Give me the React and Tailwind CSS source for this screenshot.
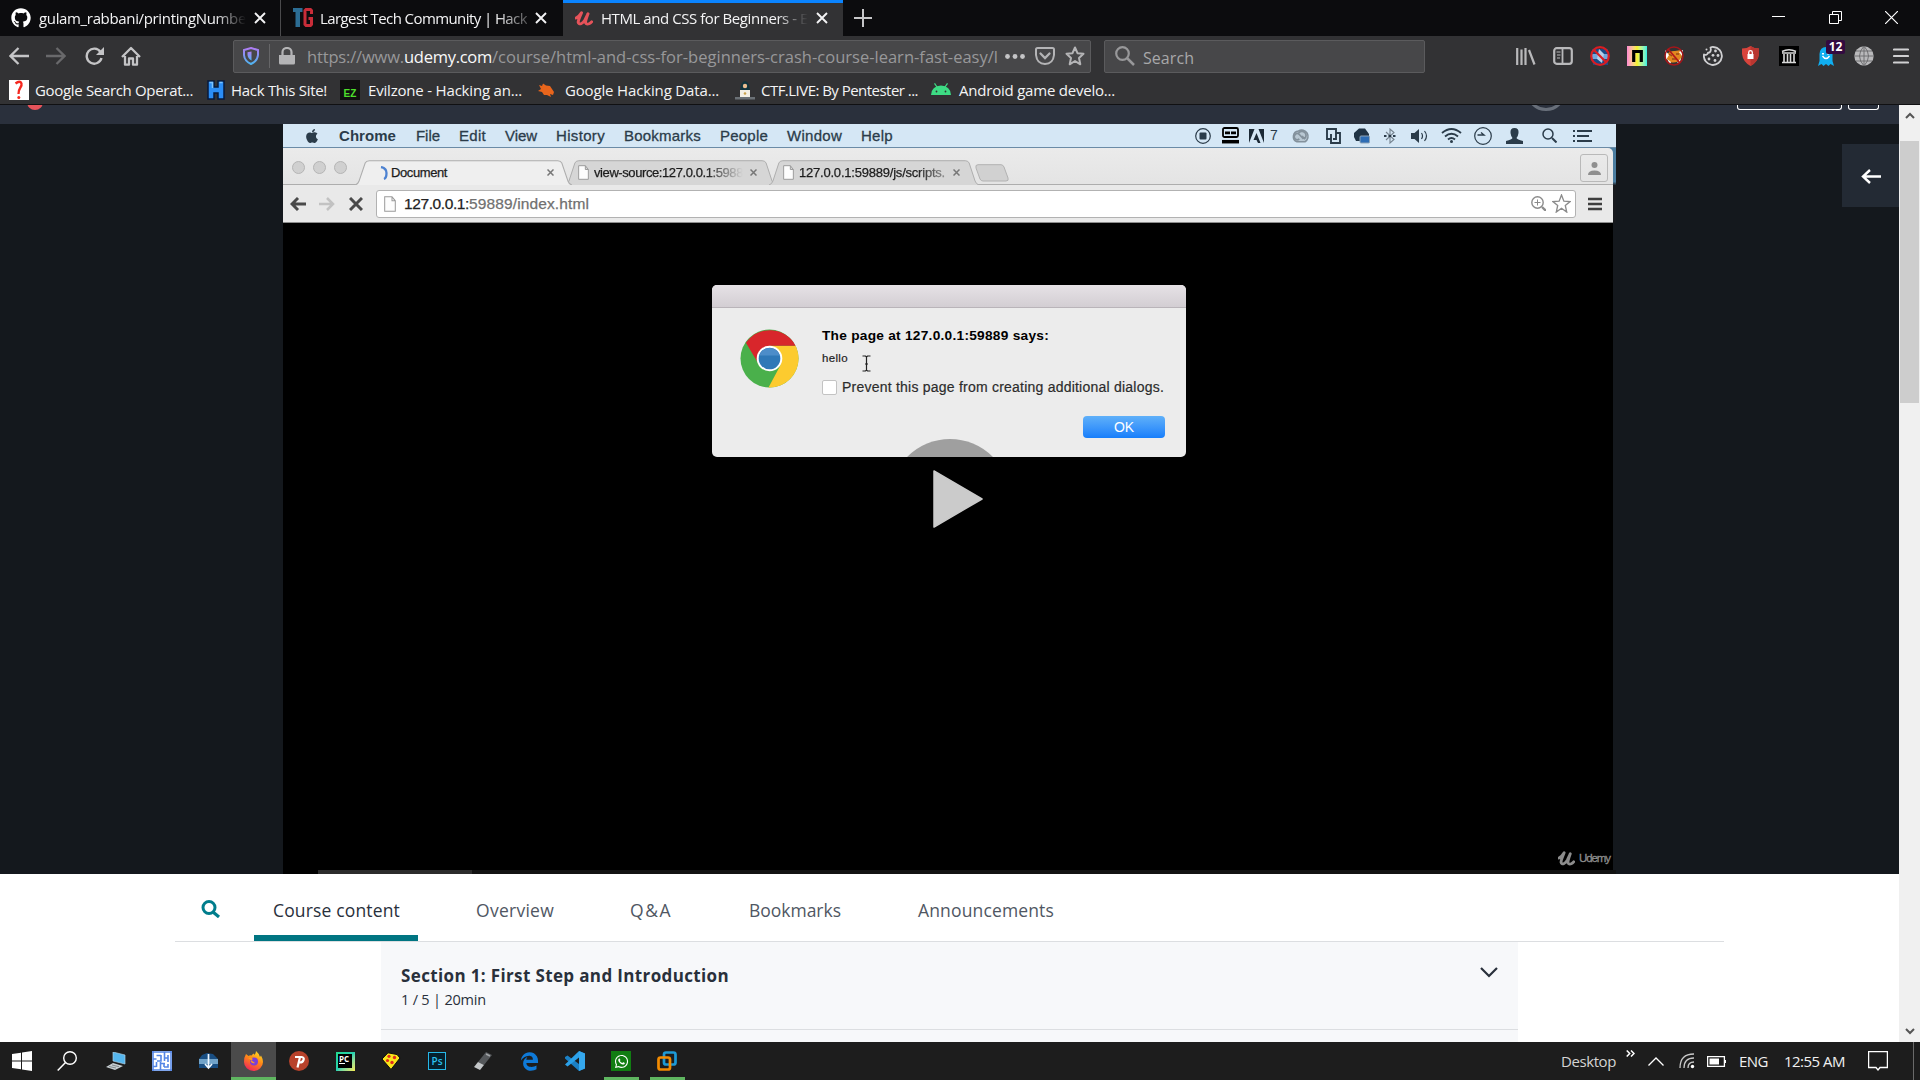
import { useLayoutEffect, useRef } from "react";
import { FaGithub, FaWhatsapp, FaApple, FaEdgeLegacy } from "react-icons/fa6";

const UI = "font-['Open_Sans',sans-serif]";

// Text line that spreads its letters over the width its class sets.
function Fit({ className = "", children }) {
  const box = useRef(null);
  const ink = useRef(null);
  useLayoutEffect(() => {
    const n = ink.current.textContent.length;
    ink.current.style.letterSpacing = "0px";
    const natural = ink.current.getBoundingClientRect().width;
    ink.current.style.letterSpacing = `${(box.current.clientWidth - natural) / n}px`;
  });
  return (
    <span ref={box} className={`block shrink-0 whitespace-pre ${className}`}>
      <span ref={ink} className="inline-block">{children}</span>
    </span>
  );
}

function Svg({ className = "", box = "0 0 20 20", children }) {
  return (
    <svg viewBox={box} preserveAspectRatio="none" fill="none" className={`block shrink-0 ${className}`}>
      {children}
    </svg>
  );
}

const Cross = ({ className }) => (
  <Svg className={className} box="0 0 12 12">
    <path d="M1 1 11 11M11 1 1 11" stroke="currentColor" strokeWidth="1.9" />
  </Svg>
);

const UdemyU = ({ className }) => (
  <Svg className={className} box="0 0 18 16">
    <path
      d="M1 7.500C3 6.600 5.200 4 6.500 1.800C5 6 3 9.500 3.200 12C3.800 15.500 8 13.500 10 9.500L13 3C11.500 7.500 9.500 12 11.200 13.500C12.800 14.700 15.500 13.200 16.700 11.500"
      stroke="currentColor"
      strokeWidth="3"
      strokeLinecap="round"
      strokeLinejoin="round"
    />
  </Svg>
);

function TabStrip() {
  return (
    <div className="flex h-9 bg-[#0c0c0e] text-[15px] leading-[36px] text-[#f4f4f5]">
      <div className="flex w-[281px] items-center border-r border-[#4a4a4c] pl-[11px]">
        <FaGithub className="size-5 shrink-0 text-white" />
        <Fit className="ml-2 w-[207px] [mask-image:linear-gradient(to_right,#000_85%,transparent)]">gulam_rabbani/printingNumbe</Fit>
        <Cross className="ml-2 size-3" />
      </div>
      <div className="flex w-[282px] items-center pl-3">
        <Svg className="size-5">
          <path d="M0 0H9.500V4H7V19H2.500V4H0Z" fill="#2c6d94" />
          <path d="M18.500 6V2.500L17.500 1.500H13L12 2.500V16.500L13 17.500H17.500L18.500 16.500V10.500H15.500" stroke="#c92d39" strokeWidth="3" />
        </Svg>
        <Fit className="ml-[7px] w-[207px] [mask-image:linear-gradient(to_right,#000_85%,rgba(0,0,0,.3))]">Largest Tech Community | Hack</Fit>
        <Cross className="ml-2 size-3" />
      </div>
      <div className="flex w-[280px] items-center border-t-[3px] border-[#0a84ff] bg-[#323234] pb-[3px] pl-3">
        <UdemyU className="h-[15px] w-[18px] text-[#e6535a]" />
        <Fit className="ml-2 w-[207px] [mask-image:linear-gradient(to_right,#000_85%,rgba(0,0,0,.3)_95%,transparent)]">HTML and CSS for Beginners - E</Fit>
        <Cross className="ml-2 size-3" />
      </div>
      <Svg className="ml-[11px] mt-[9px] size-[18px]" box="0 0 18 18">
        <path d="M9 0V18M0 9H18" stroke="#c6c6c8" strokeWidth="2" />
      </Svg>
      <div className="ml-auto mr-[22px] flex pt-[11px] text-white">
        <Svg className="h-[13px] w-[13px]" box="0 0 13 13"><path d="M0 5.500H13" stroke="currentColor" /></Svg>
        <Svg className="ml-11 size-[13px]" box="0 0 13 13">
          <path d="M.5 3.500H9.500V12.500H.5ZM3.500 3V.5H12.500V9.500H10" stroke="currentColor" />
        </Svg>
        <Svg className="ml-[43px] size-[13px]" box="0 0 13 13"><path d="M0 0 13 13M13 0 0 13" stroke="currentColor" strokeWidth="1.200" /></Svg>
      </div>
    </div>
  );
}

function Extensions() {
  return (
    <div className="ml-auto mr-[11px] flex h-5 items-center gap-[17px] text-[#b9b9bb]">
      <Svg className="h-[19px] w-5" box="0 0 20 19">
        <path d="M1.200 1V18M5.500 2.500V18M9.500 1V18M13 3 18.500 17.500" stroke="currentColor" strokeWidth="2.200" />
      </Svg>
      <Svg className="h-[18px] w-5" box="0 0 20 18">
        <rect x="1.200" y="1.200" width="17.600" height="15.600" rx="2.500" stroke="currentColor" strokeWidth="2.200" />
        <path d="M9.500 1V17" stroke="currentColor" strokeWidth="1.800" />
        <path d="M3.500 5H7.500M4 8H7.500M4 11H7" stroke="currentColor" strokeWidth="1.200" />
      </Svg>
      <Svg className="size-5">
        <path d="M2 3H18V19H3Z" fill="#194a86" />
        <path d="M2 8H18V13H2Z" fill="#72a7dd" />
        <path d="M9 3 14 8 12 17 7 13Z" fill="#b5cfe9" />
        <circle cx="10" cy="10" r="8.800" stroke="#d91d23" strokeWidth="2.200" />
        <path d="M4 4 16 16" stroke="#d91d23" strokeWidth="2.200" />
      </Svg>
      <div className="flex size-5 items-center justify-center bg-linear-to-r from-[#ff8ad0] via-[#f7f31a] to-[#28f0e4]">
        <Svg className="h-3 w-[11px]" box="0 0 11 12"><path d="M1.700 12V1.500H9.300V12" stroke="#000" strokeWidth="3.200" /></Svg>
      </div>
      <Svg className="size-5">
        <path d="M2 9Q6 4.500 11 5L17 4Q19 8 17 13Q12 18 6 16Q2 14 2 9Z" fill="#e3871f" />
        <path d="M1 4 5 9 2 14ZM19 4 15 6 18 10ZM3 13 7 16 6 18ZM17 12 16 16 13 17Z" fill="#fff" />
        <path d="M5 8 8 10M12 8H15M8 13H12" stroke="#9a4a14" strokeWidth="1.300" />
        <circle cx="10" cy="10" r="9" stroke="#a4161a" strokeWidth="1.500" />
        <path d="M4 3 16 17" stroke="#b4161a" strokeWidth="1.700" />
      </Svg>
      <Svg className="ml-[2px] size-5">
        <path d="M10.500 1A9 9 0 1 1 1 8.500C2.500 9.500 4.500 8.700 5 6.700C7 7 8.500 5 7.500 1.500Q9 .8 10.500 1Z" stroke="#d0d0d2" strokeWidth="1.800" strokeLinejoin="round" />
        <g fill="#d0d0d2"><circle cx="12.500" cy="5" r="1.400" /><circle cx="10" cy="9.300" r="1.400" /><circle cx="15" cy="9.500" r="1.400" /><circle cx="6" cy="13" r="1.400" /><circle cx="12" cy="14.500" r="1.400" /><circle cx="3.500" cy="3.500" r="1" /></g>
      </Svg>
      <Svg className="ml-[2px] h-5 w-[17px]" box="0 0 17 20">
        <path d="M8.500 0Q12 2.500 17 2.500V8Q16 16 8.500 20Q1 16 0 8V2.500Q5 2.500 8.500 0Z" fill="#d8443c" />
        <path d="M8.500 0Q12 2.500 17 2.500V8Q16 16 8.500 20Z" fill="#b93630" />
        <path d="M5.500 8H11.500V13H5.500Z" fill="#fff" />
        <path d="M6.700 8V6.500a1.800 1.800 0 0 1 3.600 0V8" stroke="#fff" strokeWidth="1.300" />
      </Svg>
      <div className="ml-[3px] flex size-5 items-center justify-center bg-black">
        <Svg className="size-4" box="0 0 16 16">
          <path d="M1 3.500Q8 0 15 3.500M1 5H15M1 14.500H15M3 6V14M6.500 6V14M9.500 6V14M13 6V14" stroke="#d8d8d8" strokeWidth="1.600" />
        </Svg>
      </div>
      <div className="relative mx-[2px] h-[19px] w-4">
        <Svg className="h-[19px] w-4" box="0 0 16 19">
          <path d="M0 19 1.500 14V7Q2 0 8 0T14.500 7V14L16 19 12.500 17 10.500 19 8 17 5.500 19 3.500 17Z" fill="#10aef0" />
          <path d="M4.500 9Q8 14 11.500 9" stroke="#fff" strokeWidth="1.400" />
          <path d="M5 6V7.500M10 6V7.500" stroke="#fff" strokeWidth="2" />
        </Svg>
        <span className="absolute -top-[7px] left-2 flex h-[14px] w-[19px] items-center justify-center rounded-[2px] bg-[#330a40] text-[12px] font-bold leading-none text-white">12</span>
      </div>
      <Svg className="ml-px size-5">
        <circle cx="10" cy="10" r="9.700" fill="#b9b9bb" />
        <path d="M10 0V20M0 10H20M2 5H18M2 15H18M10 0Q1 10 10 20M10 0Q19 10 10 20" stroke="#69696b" strokeWidth=".9" />
      </Svg>
      <Svg className="ml-[2px] h-4 w-4" box="0 0 16 16">
        <path d="M1 1.500H15M1 8H15M1 14.500H15" stroke="#d0d0d2" strokeWidth="2.200" strokeLinecap="round" />
      </Svg>
    </div>
  );
}

function NavBar() {
  return (
    <div className="flex h-10 items-center bg-[#323234] pl-[9px] text-[#c4c4c6]">
      <Svg className="h-[18px] w-5" box="0 0 20 18"><path d="M20 9H2M9.500 1 1.500 9 9.500 17" stroke="currentColor" strokeWidth="2.300" /></Svg>
      <Svg className="ml-[17px] h-[18px] w-5 text-[#69696b]" box="0 0 20 18"><path d="M0 9H18M10.500 1 18.500 9 10.500 17" stroke="currentColor" strokeWidth="2.300" /></Svg>
      <Svg className="ml-[19px] h-[18px] w-[19px]" box="0 0 19 18">
        <path d="M15.500 5A7.500 7.500 0 1 0 16.500 11" stroke="currentColor" strokeWidth="2.400" /><path d="M19 0V8H11Z" fill="currentColor" />
      </Svg>
      <Svg className="ml-[17px] h-5 w-5">
        <path d="M1 11 10 2 19 11M4 10V18.700H8V12.500H12V18.700H16V10" stroke="currentColor" strokeWidth="2.300" strokeLinejoin="round" />
      </Svg>
      <div className="ml-[92px] flex h-[33px] w-[858px] items-center rounded-[2px] border border-[#5b5b5d] bg-[#474749] pl-[9px]">
        <Svg className="h-[18px] w-4" box="0 0 16 18">
          <defs><linearGradient id="shield" x1="0" y1="0" x2="0" y2="1"><stop stopColor="#b07cf5" /><stop offset="1" stopColor="#4fb4f0" /></linearGradient></defs>
          <path d="M8 1 15 3V8Q14.500 14 8 17Q1.500 14 1 8V3Z" stroke="url(#shield)" strokeWidth="2" />
          <path d="M8.500 4.500V13.500Q5 11.500 4.500 8V5.200Z" fill="url(#shield)" />
        </Svg>
        <span className="ml-[10px] h-6 w-px bg-[#666668]" />
        <Svg className="ml-[9px] h-[18px] w-4" box="0 0 16 18">
          <path d="M0 8H16V16Q16 17.500 14.500 17.500H1.500Q0 17.500 0 16Z" fill="#b4b4b6" /><path d="M3.500 8V5a4.500 4 0 0 1 9 0V8" stroke="#b4b4b6" strokeWidth="2.200" />
        </Svg>
        <Fit className="ml-3 mt-[3px] w-[97px] text-[16.5px] text-[#98989a]">https://www.</Fit>
        <Fit className="mt-[3px] w-[88px] text-[16.5px] text-[#f9f9fa]">udemy.com</Fit>
        <Fit className="mt-[3px] w-[506px] text-[16.5px] text-[#98989a]">/course/html-and-css-for-beginners-crash-course-learn-fast-easy/l</Fit>
        <Svg className="ml-[7px] h-[5px] w-5" box="0 0 20 5"><g fill="#c4c4c6"><circle cx="2.500" cy="2.500" r="2.400" /><circle cx="10" cy="2.500" r="2.400" /><circle cx="17.500" cy="2.500" r="2.400" /></g></Svg>
        <Svg className="ml-[10px] h-[18px] w-5" box="0 0 20 18">
          <path d="M1 2.500Q1 1 2.500 1H17.500Q19 1 19 2.500V8Q18 17 10 17Q2 17 1 8Z" stroke="#b4b4b6" strokeWidth="2" />
          <path d="M5.500 6.500 10 11 14.500 6.500" stroke="#b4b4b6" strokeWidth="2.300" strokeLinecap="round" />
        </Svg>
        <Svg className="ml-[10px] size-5"><path d="M10 1.500 12.500 7.200 18.500 7.800 14 12 15.300 18.300 10 15 4.700 18.300 6 12 1.500 7.800 7.500 7.200Z" stroke="#b4b4b6" strokeWidth="2" strokeLinejoin="round" /></Svg>
      </div>
      <div className="ml-[13px] flex h-[33px] w-[321px] items-center rounded-[2px] border border-[#5b5b5d] bg-[#474749] pl-[10px]">
        <Svg className="size-5"><circle cx="7.500" cy="7.500" r="6.300" stroke="#98989a" strokeWidth="2.200" /><path d="M12 12 19 19" stroke="#98989a" strokeWidth="2.500" /></Svg>
        <Fit className="ml-2 mt-[3px] w-[51px] text-[16px] text-[#a8a8aa]">Search</Fit>
      </div>
      <Extensions />
    </div>
  );
}

function Bookmarks() {
  return (
    <div className="flex h-[29px] items-center border-b border-[#101012] bg-[#323234] pl-[9px] text-[15px] leading-[28px] text-[#f4f4f5]">
      <Svg className="h-5 w-5 bg-white"><path d="M6.500 3.500Q11 0 12.500 3.500C13.500 7 9 8 9.500 14" stroke="#f5281f" strokeWidth="2.300" /><circle cx="9.800" cy="17.500" r="1.500" fill="#f5281f" /></Svg>
      <Fit className="ml-[6px] w-[158px]">Google Search Operat...</Fit>
      <Svg className="ml-[14px] h-5 w-[18px]" box="0 0 18 20"><path d="M1 1H7V7H11V1H17V19H11V13H7V19H1Z" fill="#2b8df5" stroke="#071a3c" strokeWidth="1.500" /><path d="M2.500 2.500H5.500V8M12.500 2.500H15.500" stroke="#7bc3ff" strokeWidth="1.500" /></Svg>
      <Fit className="ml-[6px] w-24">Hack This Site!</Fit>
      <div className="ml-[13px] flex size-5 items-end justify-center bg-[#101010] pb-px font-['Liberation_Sans',sans-serif] text-[10px] font-bold leading-[11px] text-[#4ede2c]">EZ</div>
      <Fit className="ml-2 w-[154px]">Evilzone - Hacking an...</Fit>
      <Svg className="ml-4 h-[15px] w-[17px]" box="0 0 17 15"><path d="M1 2 4 3 5 .5 8 2.500 12 3 14 6 16 9 15 12 12 11 13 14 9 12 6 12 4 9 0 8 3 6Z" fill="#e8651c" /></Svg>
      <Fit className="ml-[10px] w-[154px]">Google Hacking Data...</Fit>
      <Svg className="ml-4 size-5">
        <path d="M6 5Q10-3 14 5L15 12H5Z" fill="#10343d" /><circle cx="10" cy="6" r="2.200" fill="#e9bd91" /><path d="M5 10H15V17H5Z" fill="#f3efe4" /><path d="M0 17H20V19.500H0Z" fill="#6b7176" /><circle cx="10" cy="13.500" r="1.300" fill="#c9a24c" />
      </Svg>
      <Fit className="ml-[6px] w-[157px]">CTF.LIVE: By Pentester ...</Fit>
      <Svg className="-mt-[2px] ml-[13px] h-3 w-5" box="0 0 20 12">
        <path d="M0 12Q.5 3 10 2.500Q19.500 3 20 12Z" fill="#3ddc84" /><path d="M3.500.3 6 4M16.500.3 14 4" stroke="#3ddc84" strokeWidth="1.200" /><circle cx="5.500" cy="8.500" r=".9" fill="#323234" /><circle cx="14.500" cy="8.500" r=".9" fill="#323234" />
      </Svg>
      <Fit className="ml-2 w-[156px]">Android game develo...</Fit>
    </div>
  );
}

function MacMenuBar() {
  return (
    <div className="flex h-6 w-[1333px] items-center border-b border-[#6b8ba6] bg-[#d5e7f5] pl-[22px] text-[15px] leading-[23px] text-[#2b3c4a]">
      <FaApple className="h-4 w-[14px] shrink-0" />
      <Fit className="ml-[20px] w-[57px] font-bold">Chrome</Fit>
      <Fit className="ml-5 w-[24px] [-webkit-text-stroke:0.300px]">File</Fit>
      <Fit className="ml-[19px] w-[27px] [-webkit-text-stroke:0.300px]">Edit</Fit>
      <Fit className="ml-[19px] w-[32px] [-webkit-text-stroke:0.300px]">View</Fit>
      <Fit className="ml-[19px] w-[49px] [-webkit-text-stroke:0.300px]">History</Fit>
      <Fit className="ml-[19px] w-[77px] [-webkit-text-stroke:0.300px]">Bookmarks</Fit>
      <Fit className="ml-[19px] w-[48px] [-webkit-text-stroke:0.300px]">People</Fit>
      <Fit className="ml-[19px] w-[55px] [-webkit-text-stroke:0.300px]">Window</Fit>
      <Fit className="ml-[19px] w-[32px] [-webkit-text-stroke:0.300px]">Help</Fit>
      <Svg className="ml-[302px] size-4" box="0 0 16 16"><circle cx="8" cy="8" r="7.300" stroke="currentColor" strokeWidth="1.200" /><rect x="4.500" y="4.500" width="7" height="7" rx="1" fill="currentColor" /></Svg>
      <Svg className="ml-[11px] h-[17px] w-[17px]" box="0 0 17 17"><rect x="1" y="1" width="15" height="9" rx="1.500" stroke="#000" strokeWidth="1.800" /><path d="M3 5.800H8M9 5.800H14" stroke="#000" strokeWidth="2.800" /><path d="M0 14.700H17" stroke="#000" strokeWidth="3.500" /></Svg>
      <Svg className="ml-[10px] h-[14px] w-[15px]" box="0 0 15 14"><path d="M0 0H5.500L0 14ZM15 0H9.500L15 14ZM7.500 4 11.500 14H9L7.500 11H4.500Z" fill="#1c2a36" /></Svg>
      <Fit className="ml-[6px] w-[8px] text-[14px]">7</Fit>
      <Svg className="ml-[13px] h-[15px] w-5 text-[#83919c]" box="0 0 20 15">
        <path d="M6 13.800H14A6.300 6.300 0 1 0 7.500 3A5.600 5.600 0 0 0 6 13.800Z" fill="#b9c8d3" stroke="currentColor" strokeWidth="1.600" />
        <path d="M12.500 10.800 8.300 6.500A3 3 0 1 0 8.300 10.800M7.500 5.500A4 4 0 1 1 13.500 10.500L11 8" stroke="currentColor" strokeWidth="1.700" />
      </Svg>
      <Svg className="ml-[15px] h-4 w-[15px]" box="0 0 15 16"><path d="M1 1H10V5H14V15H5V11H1ZM5 11V6M10 5V11H7" stroke="currentColor" strokeWidth="1.900" /></Svg>
      <Svg className="ml-[13px] h-4 w-4" box="0 0 16 16"><path d="M5 0.500H11L15 6V13H2L0 9V5Z" fill="#203344" /><rect x="6" y="8" width="9.500" height="7" rx="1" fill="#2d6db5" stroke="#8fa5b8" /></Svg>
      <Svg className="ml-[14px] h-4 w-[12px] text-[#75838f]" box="0 0 12 16"><path d="M2 4 10 11.500 6 15V1L10 4.500 2 12" stroke="currentColor" strokeWidth="1.100" /><path d="M0 8H12" stroke="#2b3c4a" strokeWidth="2.200" strokeDasharray="2.500 2" /></Svg>
      <Svg className="ml-[15px] h-[14px] w-[18px]" box="0 0 18 14"><path d="M0 4H3.500L8 0V14L3.500 10H0Z" fill="currentColor" /><path d="M10.500 4Q12.500 7 10.500 10M13.500 2Q17.500 7 13.500 12" stroke="currentColor" strokeWidth="1.200" /></Svg>
      <Svg className="ml-[12px] h-[15px] w-[21px]" box="0 0 21 15"><path d="M1 5Q10.500-3 20 5M4 8.500Q10.500 3 17 8.500M7 11.500Q10.500 8.500 14 11.500" stroke="currentColor" strokeWidth="1.900" /><circle cx="10.500" cy="13.500" r="1.500" fill="currentColor" /></Svg>
      <Svg className="ml-3 h-[18px] w-[18px]" box="0 0 18 18"><circle cx="9" cy="9" r="8.300" stroke="currentColor" strokeWidth="1.200" /><path d="M3.500 8H10L7 5.500" stroke="currentColor" strokeWidth="1.400" /></Svg>
      <Svg className="ml-[14px] h-4 w-[17px]" box="0 0 17 16"><path d="M8.500 0Q13 0 12.500 5Q12 8.500 10.500 10Q11 11.500 17 13V16H0V13Q6 11.500 6.500 10Q5 8.500 4.500 5Q4 0 8.500 0Z" fill="currentColor" /></Svg>
      <Svg className="ml-[19px] size-[15px]" box="0 0 15 15"><circle cx="6" cy="6" r="5" stroke="currentColor" strokeWidth="1.500" /><path d="M10 10 14.500 14.500" stroke="currentColor" strokeWidth="2" /></Svg>
      <Svg className="ml-[16px] h-3 w-[19px]" box="0 0 19 12"><path d="M0 1H2M4 1H19M0 6H2M4 6H16M0 11H2M4 11H19" stroke="currentColor" strokeWidth="1.800" /></Svg>
    </div>
  );
}

const PageIcon = ({ className }) => (
  <Svg className={className} box="0 0 12 15"><path d="M.7.7H8L11.300 4.500V14.300H.7ZM8 .7V4.500H11.300" fill="#fdfdfd" stroke="#9a9a9a" /></Svg>
);

const TabClose = ({ className }) => (
  <Svg className={`size-[7px] ${className}`} box="0 0 7 7"><path d="M.5.5 6.500 6.500M6.500.5.5 6.500" stroke="#777" strokeWidth="1.500" /></Svg>
);

function ChromeTab({ className, active, children }) {
  return (
    <div className={`relative flex h-[25px] items-center ${className}`}>
      <svg viewBox="0 0 213 25" preserveAspectRatio="none" className="absolute inset-0 size-full">
        <path d="M0 25Q3 24 4 21L10 3Q11 .7 14 .7H199Q202 .7 203 3L209 21Q210 24 213 25" fill={active ? "#efefef" : "#d6d6d6"} stroke="#adadad" strokeWidth="1" />
      </svg>
      <div className="relative flex w-full items-center text-[13px] leading-[24px] text-[#1c1c1c] [-webkit-text-stroke:0.250px]">{children}</div>
    </div>
  );
}

function ChromeWindow() {
  return (
    <div className="flex w-[1333px] bg-linear-to-b from-[#4b7da0] from-45% to-[#17191d] to-50%">
      <div className="h-[75px] w-[1330px] rounded-tr-[5px] bg-linear-to-b from-[#ebebeb] to-[#dcdcdc]">
        <div className="flex h-[37px] border-b border-[#adadad]">
          <div className="ml-[9px] mt-[13px] flex gap-2">
            <span className="size-[13px] rounded-full border border-[#b5b5b5] bg-[#d0d0d0]" />
            <span className="size-[13px] rounded-full border border-[#b5b5b5] bg-[#d0d0d0]" />
            <span className="size-[13px] rounded-full border border-[#b5b5b5] bg-[#d0d0d0]" />
          </div>
          <ChromeTab className="z-10 ml-[8px] mt-3 w-[217px]" active>
            <Svg className="ml-[25px] h-[14px] w-2" box="0 0 8 14"><path d="M1 1Q6.500 2 6.500 7T4 13" stroke="#4d82d1" strokeWidth="2.300" /></Svg>
            <Fit className="ml-[3px] w-[56px]">Document</Fit>
            <TabClose className="ml-[100px]" />
          </ChromeTab>
          <ChromeTab className="-ml-[7px] mt-3 w-[211px]">
            <PageIcon className="ml-[13px] h-[15px] w-[11px]" />
            <Fit className="ml-[5px] w-[149px] [mask-image:linear-gradient(to_right,#000_75%,transparent)]">view-source:127.0.0.1:5988</Fit>
            <TabClose className="ml-[7px]" />
          </ChromeTab>
          <ChromeTab className="-ml-[7px] mt-3 w-[210px]">
            <PageIcon className="ml-[14px] h-[15px] w-[11px]" />
            <Fit className="ml-[5px] w-[146px] [mask-image:linear-gradient(to_right,#000_80%,rgba(0,0,0,.4))]">127.0.0.1:59889/js/scripts.</Fit>
            <TabClose className="ml-[8px]" />
          </ChromeTab>
          <Svg className="-ml-[4px] mt-[16px] h-[18px] w-[34px]" box="0 0 34 18"><path d="M3 .7H26Q28 .7 29 3L33 14Q34 17 31 17H8Q6 17 5 15L1 4Q0 .7 3 .7Z" fill="#d1d1d1" stroke="#b2b2b2" /></Svg>
          <div className="ml-auto mr-[5px] mt-[6px] flex h-[28px] w-[28px] items-center justify-center rounded-[3px] border-[1.5px] border-[#b9b9b9]">
            <Svg className="h-[13px] w-[13px]" box="0 0 13 13"><circle cx="6.500" cy="3" r="3" fill="#8f8f8f" /><path d="M0 13Q0 8.500 6.500 8.500T13 13Z" fill="#8f8f8f" /></Svg>
          </div>
        </div>
        <div className="flex h-[38px] items-center border-b border-[#8d8d8d] bg-[#e9e9e9] pl-[7px]">
          <Svg className="h-[14px] w-4" box="0 0 16 14"><path d="M16 7H2M8 1 2 7 8 13" stroke="#4a4a4a" strokeWidth="2.900" /></Svg>
          <Svg className="ml-[13px] h-[14px] w-4" box="0 0 16 14"><path d="M0 7H14M8 1 14 7 8 13" stroke="#c2c2c2" strokeWidth="2.500" /></Svg>
          <Svg className="ml-[14px] size-[14px]" box="0 0 14 14"><path d="M1 1 13 13M13 1 1 13" stroke="#4a4a4a" strokeWidth="3" /></Svg>
          <div className="ml-[13px] flex h-[28px] w-[1200px] items-center rounded-[3px] border border-[#b2b2b2] bg-white pl-[7px]">
            <PageIcon className="h-4 w-3" />
            <Fit className="ml-2 w-[65px] text-[15.5px] text-[#222] [-webkit-text-stroke:0.250px]">127.0.0.1:</Fit>
            <Fit className="w-[120px] text-[15.5px] text-[#707070] [-webkit-text-stroke:0.250px]">59889/index.html</Fit>
            <Svg className="ml-auto size-[15px]" box="0 0 15 15"><circle cx="6.500" cy="6.500" r="5.700" stroke="#8b8b8b" strokeWidth="1.400" /><path d="M6.500 3.500V9.500M3.500 6.500H9.500" stroke="#8b8b8b" /><path d="M11 11 15 15" stroke="#8b8b8b" strokeWidth="2.300" /></Svg>
            <Svg className="ml-[6px] mr-1 size-[19px]"><path d="M10 1 12.500 7.500 19 8 14 12 15.500 19 10 15 4.500 19 6 12 1 8 7.500 7.500Z" stroke="#8b8b8b" strokeWidth="1.400" /></Svg>
          </div>
          <Svg className="ml-[12px] h-[14px] w-[14px]" box="0 0 14 14"><path d="M0 2H14M0 7H14M0 12H14" stroke="#3f3f3f" strokeWidth="2.700" /></Svg>
        </div>
      </div>
    </div>
  );
}

function ChromeLogo({ className }) {
  return (
    <Svg className={className} box="0 0 60 60">
      <circle cx="30" cy="30" r="29.500" fill="#4ab04b" />
      <path d="M30 17H56.500A29.500 29.500 0 0 1 29 59.500L41 37Z" fill="#fccb2f" />
      <path d="M6 14A29.500 29.500 0 0 1 56.500 17H30L18 34Z" fill="#d8262b" />
      <circle cx="30" cy="30" r="13" fill="#fff" />
      <circle cx="30" cy="30" r="11" fill="#2f78b7" />
      <path d="M19.500 27a11 11 0 0 1 21 0Z" fill="#4d8dc9" />
    </Svg>
  );
}

function AlertDialog() {
  return (
    <div className="relative ml-[429px] mt-[62px] h-[172px] w-[474px] overflow-hidden rounded-[5px] bg-[#ececec]">
      <div className="h-[23px] border-b border-[#b9b4b9] bg-linear-to-b from-[#e6e2e6] to-[#d3ced3]" />
      <div className="flex pl-[28px] pt-[21px]">
        <ChromeLogo className="size-[59px]" />
        <div className="ml-[23px]">
          <Fit className="w-[227px] text-[13.7px] font-bold leading-[14px] text-black">The page at 127.0.0.1:59889 says:</Fit>
          <div className="mt-[8px] flex h-[20px] items-start">
            <Fit className="w-[26px] text-[11.500px] leading-[14px] text-[#222] [-webkit-text-stroke:0.200px]">hello</Fit>
            <Svg className="ml-[14px] mt-[4px] h-[17px] w-[9px]" box="0 0 9 17"><path d="M.5 1H3.500L4.500 2 5.500 1H8.500M.5 16H3.500L4.500 15 5.500 16H8.500M4.500 2V15M3 9H6" stroke="#222" strokeWidth="1.200" /></Svg>
          </div>
          <div className="mt-[9px] flex items-center">
            <span className="size-[15px] rounded-[2px] border border-[#c3c3c3] bg-white" />
            <Fit className="ml-[5px] w-[322px] text-[14px] leading-[15px] text-[#2c2c2c] [-webkit-text-stroke:0.200px]">Prevent this page from creating additional dialogs.</Fit>
          </div>
        </div>
      </div>
      <div className="ml-[371px] mt-[21px] flex h-[22px] w-[82px] items-center justify-center rounded-[4px] bg-linear-to-b from-[#5fb0f9] to-[#157efb] text-[14px] text-white">OK</div>
      <div className="absolute left-[178px] top-[154px] size-[120px] rounded-full bg-[#9f9f9f]" />
    </div>
  );
}

function VideoStage() {
  return (
    <div className="flex h-[750px] bg-[#14181d] pl-[283px]">
      <div className="flex h-[750px] w-[1330px] flex-col bg-black font-['Liberation_Sans',sans-serif]">
        <MacMenuBar />
        <ChromeWindow />
        <AlertDialog />
        <Svg className="ml-[650px] mt-[13px] h-[58px] w-[50px]" box="0 0 50 59"><path d="M1 1 49 29.500 1 58Z" fill="#cbcbcb" stroke="#cbcbcb" strokeWidth="1.500" strokeLinejoin="round" /></Svg>
        <div className="mt-auto flex items-center justify-end pr-[3px] text-[#8d8d8d]">
          <UdemyU className="h-[15px] w-[17px]" />
          <Fit className="ml-1 w-[31px] text-[11.5px] leading-[16px] [-webkit-text-stroke:0.300px]">Udemy</Fit>
        </div>
        <div className="mt-1 flex h-[4px] w-[1333px] pl-[35px]">
          <div className="w-[154px] bg-[#2c2c2c]" />
          <div className="grow bg-[#121212]" />
        </div>
      </div>
      <div className="ml-auto mt-5 flex h-[63px] w-[57px] items-center bg-[#232a34] pl-[19px]">
        <Svg className="mt-[2px] h-[15px] w-5" box="0 0 20 15"><path d="M20 7.500H2M9 1 2 7.500 9 14" stroke="#fff" strokeWidth="2.400" /></Svg>
      </div>
    </div>
  );
}

function CourseTabs() {
  return (
    <div className="ml-[175px] flex h-[68px] w-[1549px] border-b border-[#dcdee1] pl-[26px] text-[17.5px] leading-[72px] text-[#505763]">
      <Svg className="mt-[26px] h-[18px] w-[19px]" box="0 0 19 18"><circle cx="8" cy="7.500" r="6" stroke="#007d8c" strokeWidth="3" /><path d="M12 12 18 17" stroke="#007d8c" strokeWidth="3.200" /></Svg>
      <div className="ml-[34px] h-[67px] w-[164px] border-b-[6px] border-[#007582] pl-[19px] text-[#29303b]">
        <Fit className="w-[127px]">Course content</Fit>
      </div>
      <Fit className="ml-[58px] w-[78px]">Overview</Fit>
      <Fit className="ml-[76px] w-[42px]">Q&A</Fit>
      <Fit className="ml-[77px] w-[92px]">Bookmarks</Fit>
      <Fit className="ml-[77px] w-[136px]">Announcements</Fit>
    </div>
  );
}

function PageContent() {
  return (
    <div className="w-[1899px] overflow-hidden bg-white">
      <div className="flex h-[19px] items-start bg-[#2a303c]">
        <div className="ml-[27px] h-[5px] w-4 overflow-hidden"><div className="-mt-[11px] size-4 rounded-full bg-[#e6535a]" /></div>
        <div className="ml-[1483px] h-[6px] w-[40px] overflow-hidden"><div className="-mt-[34px] size-10 rounded-full border-[3px] border-[#686f7a]" /></div>
        <div className="ml-[171px] h-[5px] w-[105px] rounded-b-[3px] border border-t-0 border-white" />
        <div className="ml-[6px] h-[5px] w-[31px] rounded-b-[3px] border border-t-0 border-white" />
      </div>
      <VideoStage />
      <CourseTabs />
      <div className="ml-[381px] h-[100px] w-[1137px] bg-[#f7f8fa] text-[#29303b]">
        <div className="flex h-[88px] justify-between border-b border-[#dcdee1] pl-5 pr-5">
          <div className="pt-[22px]">
            <Fit className="w-[328px] text-[17px] font-bold leading-6">Section 1: First Step and Introduction</Fit>
            <Fit className="mt-[2px] w-[85px] text-[14.500px] leading-5">1 / 5 | 20min</Fit>
          </div>
          <Svg className="mt-[25px] h-[11px] w-[18px]" box="0 0 18 11"><path d="M1 1 9 9 17 1" stroke="#29303b" strokeWidth="2.200" /></Svg>
        </div>
      </div>
    </div>
  );
}

function Scrollbar() {
  return (
    <div className="flex w-[21px] flex-col items-center bg-[#f0f0f0]">
      <Svg className="mt-[7px] h-[7px] w-[10px]" box="0 0 10 7"><path d="M1 6 5 2 9 6" stroke="#555" strokeWidth="2" /></Svg>
      <div className="mt-[22px] h-[262px] w-[19px] bg-[#cdcdcd]" />
      <Svg className="mb-[7px] mt-auto h-[7px] w-[10px]" box="0 0 10 7"><path d="M1 1 5 5 9 1" stroke="#555" strokeWidth="2" /></Svg>
    </div>
  );
}

const slot = "flex h-full w-[46px] shrink-0 items-center justify-center";

function Taskbar() {
  return (
    <div className="flex h-[38px] items-center bg-[#1d1d1d] text-[15px] text-[#f0f0f0]">
      <Svg className="ml-3 h-5 w-5"><path d="M0 3 9 1.700V9.500H0ZM10 1.500 20 0V9.500H10ZM0 10.500H9V18.300L0 17ZM10 10.500H20V20L10 18.500Z" fill="#fff" /></Svg>
      <Svg className="ml-[25px] h-5 w-5"><circle cx="13" cy="7" r="6.300" stroke="#fff" strokeWidth="1.400" /><path d="M8.500 11.500.7 19.500" stroke="#fff" strokeWidth="1.500" /></Svg>
      <div className="ml-4 flex h-full">
        <div className={slot}>
          <Svg className="h-[18px] w-5" box="0 0 20 18"><path d="M7 0 19 3V12L7 9Z" fill="#55b6ee" stroke="#a9cfe4" strokeWidth=".7" /><path d="M0 15 7 11 17 14 9 18Z" fill="#c9d0d3" /><path d="M3 14.500 10 16M6 13 13 14.700" stroke="#70777b" strokeWidth=".8" /></Svg>
        </div>
        <div className={slot}>
          <Svg className="size-5 bg-white"><path d="M0 1H20M1 0V20M0 19H20M19 0V20M4.500 4.500H9M4.500 8H1M9 4V10H5M12.500 1V7H16M16 4V11M12.500 7V10M4.500 11V16M4.500 15.500H1M8.500 11V19M8.500 12.500H13M12 16V12.500M12 16H16V13" stroke="#5486e5" strokeWidth="1.600" /></Svg>
        </div>
        <div className={slot}>
          <Svg className="h-[18px] w-[19px]" box="0 0 19 18"><path d="M3 3 8 1 14 2 19 7V16H0V7Z" fill="#194e82" /><path d="M0 7H19V12H0Z" fill="#71a3c9" /><path d="M9.500 2V15M6 12 9.500 16 13 12" stroke="#eef7ff" strokeWidth="1.700" /></Svg>
        </div>
        <div className="flex h-full w-[45px] items-center justify-center border-b-[3px] border-[#5fb660] bg-[#4b4b4b] pt-[3px]">
          <Svg className="h-5 w-[19px]" box="0 0 19 20">
            <defs><linearGradient id="fox" x1=".8" y1="0" x2=".3" y2="1"><stop stopColor="#ffe226" /><stop offset=".45" stopColor="#ff8a16" /><stop offset="1" stopColor="#f0245c" /></linearGradient></defs>
            <path d="M2 3 4.500 5Q6 4 7.500 4.500Q8.500 3 10 2.500L10.500 4Q12 2 12 0Q15 2.500 16 6L17 4.500Q19 8 19 11A9.500 9 0 0 1 0 11Q0 6 2 3Z" fill="url(#fox)" />
            <circle cx="10" cy="10.500" r="4" fill="#7b3fd8" /><path d="M4 7Q7 6 9 8L6.500 10Q8 13 11 12" fill="#ff9b1c" />
          </Svg>
        </div>
        <div className={slot}>
          <div className="flex size-5 items-center justify-center rounded-full bg-[#b8422b]"><Svg className="h-[13px] w-[11px]" box="0 0 11 13"><path d="M1 2H7.500Q10.500 2.500 9.500 5T6 7.500H4M6 2 3.500 12.500" stroke="#fff" strokeWidth="2.200" /></Svg></div>
        </div>
        <div className={slot}>
          <div className="size-[19px] bg-linear-to-br from-[#22d88f] via-[#28d1b0] to-[#f5ec4c] p-[2.500px]"><div className="h-[14px] w-[14px] bg-black pl-px text-[8px] font-bold leading-[9px] text-white">PC<div className="h-px w-[6px] bg-white" /></div></div>
        </div>
        <div className={slot}>
          <Svg className="h-[18px] w-5" box="0 0 20 18"><path d="M7 .8 16 2.500 19 6 10 17.500 1 7Z" fill="#f9e51a" stroke="#0c0c0c" strokeWidth="1" /><g fill="#e12b1f"><circle cx="8" cy="4.300" r="1.600" /><circle cx="13.500" cy="5.500" r="1.700" /><circle cx="6.500" cy="8.500" r="1.600" /><circle cx="11" cy="10.500" r="1.700" /></g></Svg>
        </div>
        <div className={slot}>
          <div className="flex h-[18px] w-[18px] items-center justify-center border border-[#26b8e8] bg-[#05202e] text-[10px] font-semibold leading-none text-[#2cc0f0]">Ps</div>
        </div>
        <div className={slot}>
          <Svg className="h-[18px] w-[18px]" box="0 0 18 18"><path d="M12 0 18 3 10 13 4 10Z" fill="#55585b" /><path d="M4 10 10 13 6 18 0 15Z" fill="#c3c6c8" /><path d="M12 2 16 4" stroke="#a3a6a8" strokeWidth="1.500" /></Svg>
        </div>
        <div className={slot}><FaEdgeLegacy className="size-[19px] text-[#0f7ad8]" /></div>
        <div className={slot}>
          <Svg className="h-5 w-5"><path d="M14 0 20 2.500V17.500L14 20 0 7.500V6L2.500 4.500 14 13Z" fill="#1b80c4" /><path d="M14 0V6.500L2.500 15.500 0 13.500 13 1Z" fill="#2ba0e8" /><path d="M14 0 20 2.500V17.500L14 20Z" fill="#35a8ee" /></Svg>
        </div>
        <div className={slot}>
          <div className="flex h-full w-[35px] items-center justify-center border-b-[3px] border-[#5fb660] pt-[3px]"><div className="flex size-5 items-center justify-center bg-[#117d12]"><FaWhatsapp className="size-[15px] text-white" /></div></div>
        </div>
        <div className={slot}>
          <div className="flex h-full w-[35px] items-center justify-center border-b-[3px] border-[#5fb660] pt-[3px]">
            <Svg className="h-5 w-5"><rect x="7" y="1.500" width="11.500" height="12" rx="2" stroke="#1d9ad6" strokeWidth="2.700" /><rect x="1.500" y="6.500" width="11.500" height="12" rx="2" stroke="#f38b00" strokeWidth="2.700" /></Svg>
          </div>
        </div>
      </div>
      <Fit className="ml-auto w-[55px] text-[#d4d4d4]">Desktop</Fit>
      <Svg className="-mt-[15px] ml-[10px] h-[7px] w-[9px]" box="0 0 9 7"><path d="M.7.5 3.700 3.500.7 6.500M5 .5 8 3.500 5 6.500" stroke="#fff" strokeWidth="1.500" /></Svg>
      <Svg className="ml-[13px] h-[9px] w-4" box="0 0 16 9"><path d="M.5 8.500 8 1 15.500 8.500" stroke="#fff" strokeWidth="1.300" /></Svg>
      <Svg className="ml-[15px] h-4 w-4" box="0 0 16 16"><path d="M1 15Q1 1 15 1M5 15Q5 5 15 5M9 15Q9 9 15 9" stroke="#c9c9c9" strokeWidth="1.300" /><circle cx="13.500" cy="13.500" r="1.700" fill="#fff" /></Svg>
      <Svg className="ml-[12px] h-[11px] w-[19px]" box="0 0 19 11"><path d="M.6.6H17.400V10.400H.6Z" stroke="#fff" strokeWidth="1.300" /><path d="M2.500 2.500H12V8.500H2.500ZM17.500 4H19V7H17.500Z" fill="#fff" /></Svg>
      <Fit className="ml-[13px] w-[29px]">ENG</Fit>
      <Fit className="ml-[16px] w-[61px]">12:55 AM</Fit>
      <Svg className="ml-[23px] h-5 w-5"><path d="M.6.6H19.400V16.500H12L10 19 8 16.500H.6Z" stroke="#fff" strokeWidth="1.300" /></Svg>
      <span className="ml-[25px] mr-[6px] h-full w-px bg-[#6a6a6a]" />
    </div>
  );
}

export default function App() {
  return (
    <div className={`flex h-[1080px] w-[1920px] flex-col overflow-hidden ${UI}`}>
      <TabStrip />
      <NavBar />
      <Bookmarks />
      <div className="flex h-[937px]">
        <PageContent />
        <Scrollbar />
      </div>
      <Taskbar />
    </div>
  );
}
